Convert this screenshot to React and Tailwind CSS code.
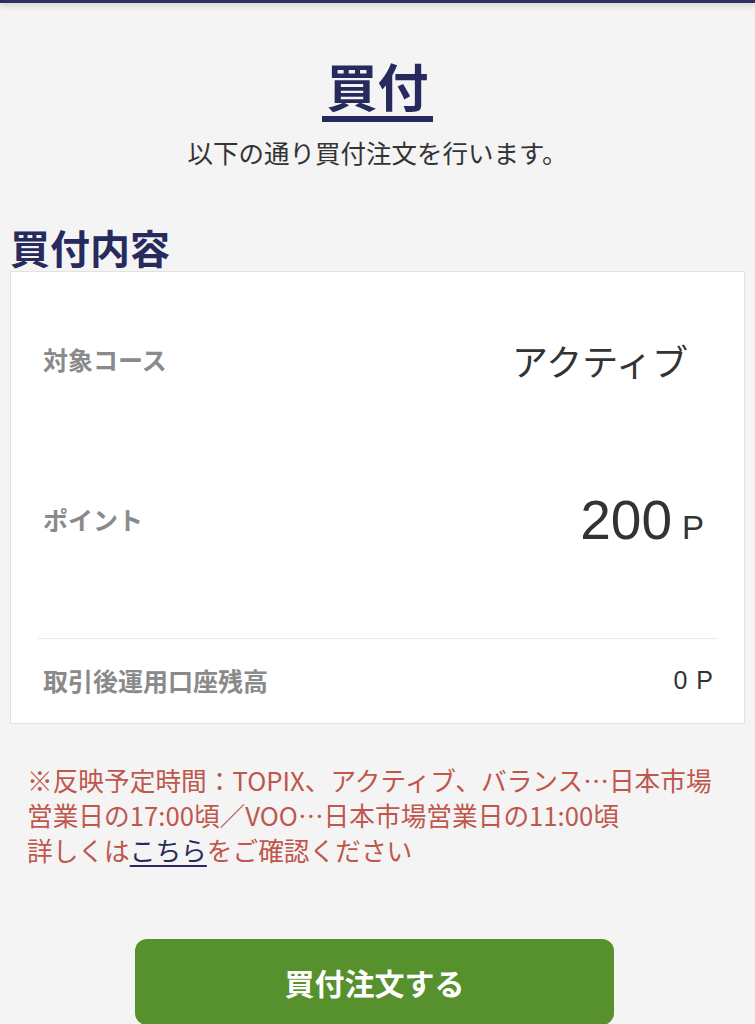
export default function App() {
  const jp = { fontFamily: '"Noto Sans CJK JP", "Noto Sans", sans-serif' };
  return (
    <div lang="ja" className="min-h-[1024px] bg-[#f4f4f4] overflow-hidden" style={jp}>
      <div className="h-[3px] bg-[#2d2f5e] shadow-[0_2px_6px_rgba(0,0,0,0.25)]" />
      <div className="flex flex-col items-center pt-[54px]">
        <h1 className="inline-block px-[4px] pb-[3px] border-b-[6px] border-[#262a5d] text-[51px] leading-[56px] font-bold text-[#262a5d]">
          買付
        </h1>
        <p className="mt-[14px] text-[25.5px] leading-[32px] text-[#333333]">
          以下の通り買付注文を行います。
        </p>
      </div>
      <h2 className="mt-[57px] ml-[10px] text-[40px] leading-[44px] font-bold text-[#262a5d]">
        買付内容
      </h2>
      <div className="mx-[10px] mt-[2px] bg-white border border-[#e2e2e2]">
        <div className="h-[176px] flex items-center justify-between pl-[32px] pr-[56px]">
          <span className="text-[25px] font-bold text-[#8a8a8a]">対象コース</span>
          <span className="text-[36px] text-[#333333]">アクティブ</span>
        </div>
        <div className="h-[144px] flex items-center justify-between pl-[32px] pr-[40px]">
          <span className="text-[25px] font-bold text-[#8a8a8a]">ポイント</span>
          <span className="flex items-baseline text-[#333333]" style={{ fontFamily: '"Liberation Sans", Arial, sans-serif' }}>
            <span className="text-[55px] leading-none">200</span>
            <span className="ml-[10px] text-[33px] leading-none">P</span>
          </span>
        </div>
        <div className="mt-[46px] mx-[27px] h-px bg-[#e8e8e8]" />
        <div className="h-[84px] flex items-center justify-between pl-[32px] pr-[31px]">
          <span className="text-[25px] font-bold text-[#8a8a8a]">取引後運用口座残高</span>
          <span className="flex items-baseline text-[25px] text-[#333333]" style={{ fontFamily: '"Liberation Sans", Arial, sans-serif' }}>
            <span>0</span>
            <span className="ml-[9px]">P</span>
          </span>
        </div>
      </div>
      <div className="mt-[38px] pl-[27px] text-[25.7px] leading-[35px] text-[#c0574c] whitespace-nowrap">
        <div>※反映予定時間：TOPIX、アクティブ、バランス⋯日本市場</div>
        <div>営業日の17:00頃／VOO⋯日本市場営業日の11:00頃</div>
        <div>
          詳しくは<a className="text-[#262a5d] underline underline-offset-[4px]">こちら</a>をご確認ください
        </div>
      </div>
      <div className="flex mt-[72px] pl-[135px]">
        <button className="w-[479px] h-[86px] rounded-[12px] bg-[#56912d] text-white text-[30px] font-bold flex items-center justify-center">
          買付注文する
        </button>
      </div>
    </div>
  );
}
